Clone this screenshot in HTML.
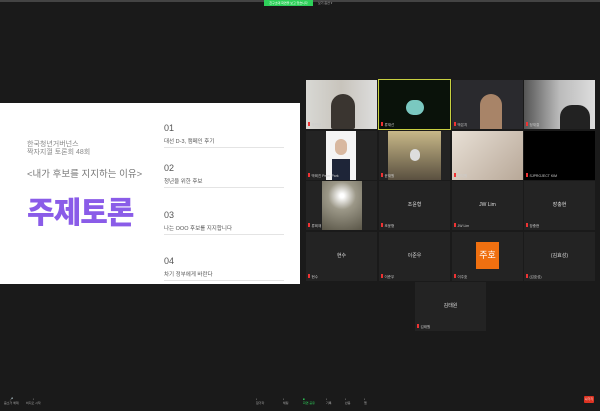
<!DOCTYPE html><html><head><meta charset="utf-8"><style>
body{margin:0;width:600px;height:411px;background:#1a1a1a;position:relative;overflow:hidden;font-family:"Liberation Sans","Noto Sans CJK KR",sans-serif}
.a{position:absolute}
.t{position:absolute;width:71px;height:49px;background:#232323;color:#ddd;font-size:5px;text-align:center;line-height:49px}
.n{position:absolute;left:2px;bottom:1px;line-height:6px;font-size:3.5px;color:#ccc}
.n:before{content:"";display:inline-block;width:1.5px;height:4px;background:#e33;margin-right:2px}
.s{color:#555;font-size:7px}
.h{border-bottom:1px solid #e4e4e4;width:120px;padding-bottom:2px;font-size:5.5px;color:#555}
</style></head><body>
<div class="a" style="left:0;top:0;width:600px;height:2px;background:#444"></div>
<div class="a" style="left:264px;top:0;width:49px;height:6px;background:#2ed05a;font-size:3px;color:#fff;text-align:center;line-height:6px">친구초대 화면을 보고 있습니다</div>
<div class="a" style="left:318px;top:1px;font-size:3px;color:#aaa">보기 옵션 ▾</div>
<div class="a" style="left:0;top:103px;width:300px;height:181px;background:#fff">
<div class="a" style="left:27px;top:38px;font-size:7px;color:#888;line-height:8px">한국청년거버넌스<br>짝자지껄 토론회 48회</div>
<div class="a" style="left:27px;top:63px;font-size:9.5px;color:#777">&lt;내가 후보를 지지하는 이유&gt;</div>
<div class="a" style="left:27px;top:85px;font-size:30px;font-weight:900;color:#8a5ce8;letter-spacing:-1px">주제토론</div>
<div class="a" style="left:164px;top:20px"><div class="s" style="font-size:9px;color:#555">01</div><div class="h" style="margin-top:4px">대선 D-3, 캠페인 후기</div></div>
<div class="a" style="left:164px;top:60px"><div class="s" style="font-size:9px;color:#555">02</div><div class="h" style="margin-top:4px">청년을 위한 후보</div></div>
<div class="a" style="left:164px;top:107px"><div class="s" style="font-size:9px;color:#555">03</div><div class="h" style="margin-top:4px">나는 OOO 후보를 지지합니다</div></div>
<div class="a" style="left:164px;top:153px"><div class="s" style="font-size:9px;color:#555">04</div><div class="h" style="margin-top:4px">차기 정부에게 바란다</div></div>
</div>
<div class="t" style="left:306px;top:80px;background:linear-gradient(90deg,#d8d8d4,#c8c4bc 50%,#ddd)"><div class="a" style="left:25px;top:14px;width:24px;height:35px;border-radius:12px 12px 2px 2px;background:#3a3530"></div><div class="n">박민현</div></div>
<div class="t" style="left:379px;top:80px;background:#0a120a;outline:1px solid #c8d040"><div class="a" style="left:27px;top:20px;width:18px;height:15px;border-radius:8px;background:#7ac8c0"></div><div class="n">류재선</div></div>
<div class="t" style="left:452px;top:80px;background:#2a2a2e"><div class="a" style="left:28px;top:14px;width:22px;height:35px;border-radius:11px 11px 0 0;background:#a88468"></div><div class="n">박은지</div></div>
<div class="t" style="left:524px;top:80px;background:linear-gradient(90deg,#555,#bbb 50%,#ddd)"><div class="a" style="left:36px;top:25px;width:30px;height:24px;border-radius:12px 12px 0 0;background:#222"></div><div class="n">정재결</div></div>
<div class="t" style="left:306px;top:131px"><div class="a" style="left:20px;top:0;width:30px;height:49px;background:#f4f4f4"><div class="a" style="left:6px;top:28px;width:18px;height:21px;background:#1e2538"></div><div class="a" style="left:9px;top:8px;width:12px;height:16px;border-radius:6px;background:#d8b8a0"></div></div><div class="n">박희진 Peter Park</div></div>
<div class="t" style="left:379px;top:131px"><div class="a" style="left:9px;top:0;width:53px;height:49px;background:linear-gradient(#c8b888,#5a5040)"></div><div class="a" style="left:31px;top:18px;width:10px;height:12px;border-radius:5px;background:#ddd"></div><div class="n">윤재원</div></div>
<div class="t" style="left:452px;top:131px;background:linear-gradient(135deg,#e8e0d6,#b8a898)"><div class="n">정지원</div></div>
<div class="t" style="left:524px;top:131px;background:#000"><div class="n">SJPROJECT KIM</div></div>
<div class="t" style="left:306px;top:181px"><div class="a" style="left:16px;top:0;width:40px;height:49px;background:radial-gradient(circle at 50% 30%,#fff 5%,#9c9888 35%,#5a5648)"></div><div class="n">류희재</div></div>
<div class="t" style="left:379px;top:181px">조윤형<div class="n">조윤형</div></div>
<div class="t" style="left:452px;top:181px">JW Lim<div class="n">JW Lim</div></div>
<div class="t" style="left:524px;top:181px">장충현<div class="n">장충현</div></div>
<div class="t" style="left:306px;top:232px">현수<div class="n">현수</div></div>
<div class="t" style="left:379px;top:232px">이준우<div class="n">이준우</div></div>
<div class="t" style="left:452px;top:232px"><div class="a" style="left:24px;top:10px;width:23px;height:27px;background:#f07010;color:#fff;font-size:9px;line-height:27px">주호</div><div class="n">이주호</div></div>
<div class="t" style="left:524px;top:232px">(김효성)<div class="n">(김효성)</div></div>
<div class="t" style="left:415px;top:282px">김태원<div class="n">김태원</div></div>
<div class="a" style="left:0;top:395px;width:600px;height:16px;background:#1a1a1a;font-size:3px;color:#aaa">
<div class="a" style="left:4px;top:2px;text-align:center">🎤<br>음소거 해제</div>
<div class="a" style="left:26px;top:2px;text-align:center">▪<br>비디오 시작</div>
<div class="a" style="left:256px;top:2px">▪<br>참가자</div>
<div class="a" style="left:283px;top:2px">▪<br>채팅</div>
<div class="a" style="left:303px;top:2px;color:#2ed05a">■<br>화면 공유</div>
<div class="a" style="left:326px;top:2px">▪<br>기록</div>
<div class="a" style="left:345px;top:2px">▪<br>반응</div>
<div class="a" style="left:364px;top:2px">▪<br>앱</div>
<div class="a" style="left:584px;top:1px;width:10px;height:7px;background:#d32;border-radius:1px;color:#fff;line-height:7px;text-align:center">나가기</div>
</div>
</body></html>
